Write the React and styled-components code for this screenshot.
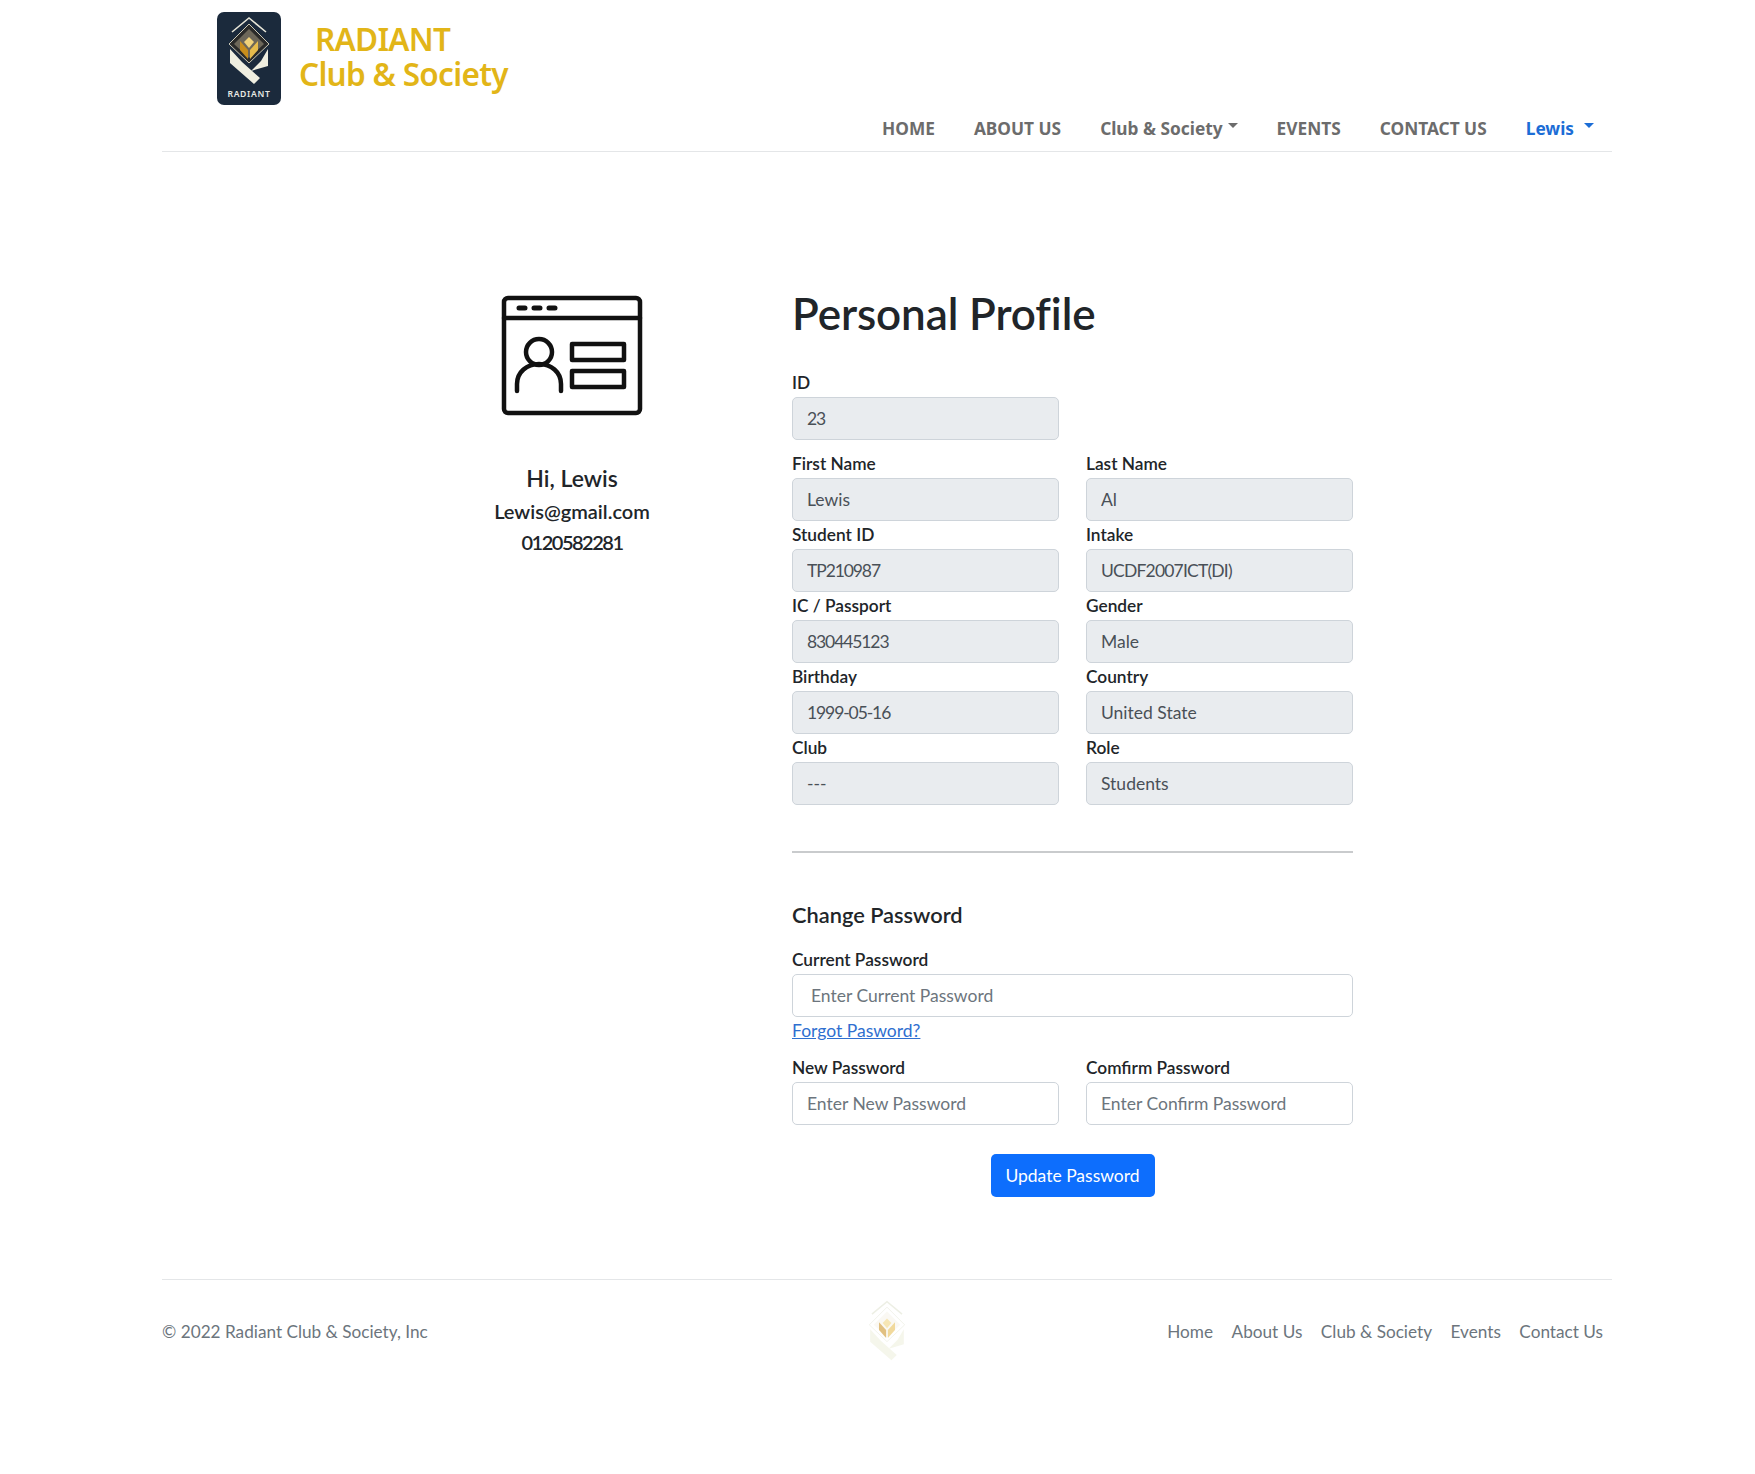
import React from "react";
import styled, { createGlobalStyle } from "styled-components";

const GlobalStyle = createGlobalStyle`
  * { box-sizing: border-box; }
  body {
    margin: 0;
    background: #fff;
    color: #212529;
    font-family: "Lato", "Noto Sans", sans-serif;
    font-size: 17.5px;
  }
`;

const Page = styled.div`
  min-height: 1474px;
  padding: 0 143px 0 162px;
`;

const Header = styled.header`
  height: 152px;
  padding-top: 12px;
  border-bottom: 1px solid #e4e6e8;
`;

const Brand = styled.div`
  display: flex;
  gap: 18px;
  height: 93px;
  padding-left: 55px;
`;

const BrandText = styled.div`
  display: flex;
  flex-direction: column;
  padding-top: 9px;
  color: #e2b518;
  font-family: "Noto Sans", sans-serif;
  font-size: 31.5px;
  font-weight: 600;
  line-height: 35px;
  letter-spacing: -0.7px;
`;

const BrandLine = styled.span`
  display: block;
  padding-left: ${(p) => p.$indent || 0}px;
`;

const Nav = styled.nav`
  display: flex;
  justify-content: flex-end;
  align-items: center;
  gap: 39px;
  height: 46px;
  padding-right: 18px;
`;

const NavItem = styled.a`
  display: flex;
  align-items: center;
  color: ${(p) => (p.$active ? "#1c6dd6" : "#6c6c6c")};
  font-family: "Noto Sans", sans-serif;
  font-size: 17.3px;
  font-weight: 700;
`;

const Caret = styled.span`
  width: 0;
  height: 0;
  margin: 0 0 6px ${(p) => p.$gap}px;
  border-left: 5px solid transparent;
  border-right: 5px solid transparent;
  border-top: 5px solid currentColor;
`;

const Main = styled.main`
  display: flex;
  gap: 90px;
  padding: 134px 0 0 280px;
`;

const Side = styled.aside`
  display: flex;
  flex-direction: column;
  align-items: center;
  width: 260px;
  padding-top: 9px;
`;

const IdIcon = styled.svg`
  width: 142px;
  height: 122px;
  margin-bottom: 44px;
`;

const Greeting = styled.div`
  font-size: 23px;
  font-weight: 600;
  line-height: 35px;
`;

const SideLine = styled.div`
  font-size: 20px;
  font-weight: 600;
  line-height: 31px;
  letter-spacing: ${(p) => (p.$digits ? "-1.5px" : "0")};
`;

const Content = styled.div`
  width: 561px;
`;

const Title = styled.h1`
  margin: 0 0 29px;
  font-size: 44px;
  font-weight: 600;
  line-height: 54px;
  letter-spacing: -0.1px;
`;

const Row = styled.div`
  display: grid;
  grid-template-columns: 1fr 1fr;
  gap: 27px;
  margin-top: ${(p) => p.$top || 0}px;
`;

const Field = styled.div`
  display: flex;
  flex-direction: column;
  grid-column: ${(p) => (p.$wide ? "1 / -1" : "auto")};
`;

const Label = styled.label`
  height: 28px;
  font-size: 17.3px;
  font-weight: 600;
  line-height: 28px;
  color: #212529;
`;

const Input = styled.input`
  width: 100%;
  height: 43px;
  padding: 0 ${(p) => p.$pad || 14}px;
  background: ${(p) => (p.readOnly ? "#e9ecef" : "#fff")};
  border: 1px solid #ced4da;
  border-radius: 5px;
  color: #495057;
  font: inherit;
  letter-spacing: ${(p) => p.$tight || 0}px;
  outline: none;

  &::placeholder {
    color: #6c757d;
    opacity: 1;
  }
`;

const Divider = styled.hr`
  height: 2px;
  margin: 46px 0 0;
  background: #c9cbcd;
  border: 0;
`;

const SubTitle = styled.h2`
  margin: 47px 0 16px;
  font-size: 21.8px;
  font-weight: 600;
  line-height: 30px;
`;

const Forgot = styled.a`
  display: block;
  margin-top: 3px;
  color: #2f6fd0;
  line-height: 22px;
  text-decoration: underline;
`;

const Actions = styled.div`
  display: flex;
  justify-content: center;
  margin-top: 29px;
`;

const Button = styled.button`
  width: 164px;
  height: 43px;
  background: #0d6efd;
  border: 0;
  border-radius: 5px;
  color: #fff;
  font: inherit;
`;

const Footer = styled.footer`
  display: grid;
  grid-template-columns: 1fr auto 1fr;
  align-items: center;
  margin-top: 82px;
  padding-top: 20px;
  border-top: 1px solid #e4e6e8;
  color: #6c757d;
  font-size: 17.2px;
`;

const FooterNav = styled.nav`
  display: flex;
  justify-content: flex-end;
  gap: 18.5px;
  padding-right: 9px;
`;

const FooterLink = styled.a`
  color: #6c757d;
`;

const Logo = styled.svg`
  width: 64px;
  height: 93px;
  flex: none;
`;

const FooterLogo = styled.svg`
  width: 44px;
  height: 62px;
`;

const LogoMark = ({ faded }) => (
  <g opacity={faded ? 0.55 : 1}>
    <path d="M13 37 V51 L37 72 L43 66 L25 50 Z" fill={faded ? "#eef0dc" : "#efeee0"} />
    <path d="M51 37 V54 L34 59 L44 49 Z" fill={faded ? "#eef0dc" : "#efeee0"} />
    <path d="M15 20 L32 6 L49 20" fill="none" stroke={faded ? "#dfe2cf" : "#e8e6d8"} strokeWidth="1.6" />
    <path d="M32 12 L52 32 L32 51 L12 32 Z" fill={faded ? "#fff" : "#2a2a29"} stroke={faded ? "#e6e8d8" : "#c9c6b4"} strokeWidth="1" />
    <path d="M32 17 L47 32 L32 46 L17 32 Z" fill={faded ? "#f6f4ea" : "#6d6759"} />
    <path d="M32 25 L37 30 L32 36 L27 30 Z" fill="#f0d27a" />
    <path d="M23 29 L31 38 L31 47 L23 38 Z" fill="#c98e1c" />
    <path d="M41 29 L33 38 L33 47 L41 38 Z" fill="#e6bb4c" />
  </g>
);

const hasDigits = (value) => /\d/.test(value);

// Lato digits run wider than the reference, long mixed values get less squeeze
const tightness = (value) => {
  if (!hasDigits(value)) return 0;
  return value.length > 12 ? -0.8 : -1.1;
};

const App = () => {
  const profile = [
    [["First Name", "Lewis"], ["Last Name", "Al"]],
    [["Student ID", "TP210987"], ["Intake", "UCDF2007ICT(DI)"]],
    [["IC / Passport", "830445123"], ["Gender", "Male"]],
    [["Birthday", "1999-05-16"], ["Country", "United State"]],
    [["Club", "---"], ["Role", "Students"]],
  ];

  return (
    <Page>
      <GlobalStyle />
      <Header>
        <Brand>
          <Logo viewBox="0 0 64 93">
            <rect width="64" height="93" rx="7" fill="#1b2a3c" />
            <LogoMark />
            <text x="32" y="85" textAnchor="middle" fill="#e9e9e4" fontSize="8.6" fontWeight="600" letterSpacing="0.7" fontFamily="Noto Sans, sans-serif">RADIANT</text>
          </Logo>
          <BrandText>
            <BrandLine $indent={16}>RADIANT</BrandLine>
            <BrandLine>Club &amp; Society</BrandLine>
          </BrandText>
        </Brand>
        <Nav>
          <NavItem>HOME</NavItem>
          <NavItem>ABOUT US</NavItem>
          <NavItem>Club &amp; Society<Caret $gap={5} /></NavItem>
          <NavItem>EVENTS</NavItem>
          <NavItem>CONTACT US</NavItem>
          <NavItem $active>Lewis<Caret $gap={10} /></NavItem>
        </Nav>
      </Header>

      <Main>
        <Side>
          <IdIcon viewBox="0 0 142 122" fill="none" stroke="#111" strokeWidth="4.5" strokeLinecap="round" strokeLinejoin="round">
            <rect x="3" y="3" width="136" height="115" rx="4" />
            <path d="M3 23 H139" />
            <path d="M18 13 H24 M33 13 H39 M48 13 H54" strokeWidth="5" />
            <circle cx="38" cy="57" r="13" />
            <path d="M16 96 V89 C16 77 26 69 38 69 C50 69 60 77 60 89 V96" />
            <rect x="71" y="49" width="52" height="16" />
            <rect x="71" y="76" width="52" height="16" />
          </IdIcon>
          <Greeting>Hi, Lewis</Greeting>
          <SideLine>Lewis@gmail.com</SideLine>
          <SideLine $digits>0120582281</SideLine>
        </Side>

        <Content>
          <Title>Personal Profile</Title>
          <Row>
            <Field>
              <Label>ID</Label>
              <Input readOnly value="23" $tight={tightness("23")} />
            </Field>
          </Row>
          {profile.map((row, i) => (
            <Row key={row[0][0]} $top={i === 0 ? 10 : 0}>
              {row.map(([label, value]) => (
                <Field key={label}>
                  <Label>{label}</Label>
                  <Input readOnly value={value} $tight={tightness(value)} />
                </Field>
              ))}
            </Row>
          ))}
          <Divider />
          <SubTitle>Change Password</SubTitle>
          <Row>
            <Field $wide>
              <Label>Current Password</Label>
              <Input $pad={18} placeholder="Enter Current Password" />
              <Forgot>Forgot Pasword?</Forgot>
            </Field>
          </Row>
          <Row $top={12}>
            <Field>
              <Label>New Password</Label>
              <Input placeholder="Enter New Password" />
            </Field>
            <Field>
              <Label>Comfirm Password</Label>
              <Input placeholder="Enter Confirm Password" />
            </Field>
          </Row>
          <Actions>
            <Button>Update Password</Button>
          </Actions>
        </Content>
      </Main>

      <Footer>
        <div>© 2022 Radiant Club &amp; Society, Inc</div>
        <FooterLogo viewBox="10 4 44 70">
          <LogoMark faded />
        </FooterLogo>
        <FooterNav>
          <FooterLink>Home</FooterLink>
          <FooterLink>About Us</FooterLink>
          <FooterLink>Club &amp; Society</FooterLink>
          <FooterLink>Events</FooterLink>
          <FooterLink>Contact Us</FooterLink>
        </FooterNav>
      </Footer>
    </Page>
  );
};

export default App;
